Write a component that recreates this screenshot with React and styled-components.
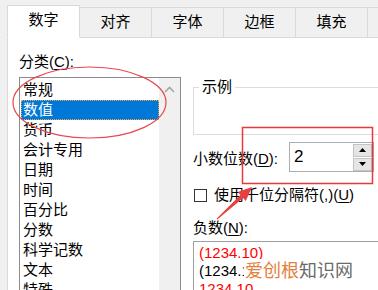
import React from 'react';
import styled, { createGlobalStyle } from 'styled-components';

const GlobalStyle = createGlobalStyle`
  html, body {
    margin: 0;
    padding: 0;
    background: #f0f0f0;
    overflow: hidden;
  }
  body {
    font-family: "Liberation Sans", "Noto Sans CJK SC", sans-serif;
    font-size: 15px;
    color: #000;
  }
`;

const Screen = styled.div`
  position: relative;
  width: 378px;
  height: 290px;
  overflow: hidden;
  background: #f0f0f0;
`;

const TabBar = styled.div`
  display: flex;
  align-items: flex-end;
  height: 38px;
  padding-left: 7px;
  box-sizing: border-box;
`;

const Tab = styled.div`
  flex: none;
  box-sizing: border-box;
  width: ${p => (p.active ? 73 : 72)}px;
  height: ${p => (p.active ? 33 : 31)}px;
  display: flex;
  align-items: center;
  justify-content: center;
  padding-bottom: ${p => (p.active ? 3 : 1)}px;
  line-height: 20px;
  background: ${p => (p.active ? '#fff' : '#f0f0f0')};
  border: 1px solid #d9d9d9;
  border-left: ${p => (p.active ? '1px solid #d9d9d9' : 'none')};
  border-bottom: ${p => (p.active ? '1px solid #fff' : '1px solid #d9d9d9')};
`;

const TabFill = styled.div`
  flex: 1;
  height: 1px;
  background: #d9d9d9;
`;

const Panel = styled.div`
  margin-left: 7px;
  height: 252px;
  display: flex;
  gap: 12px;
  padding: 14px 0 0 11px;
  background: #fff;
  border-left: 1px solid #d9d9d9;
`;

const LeftColumn = styled.div`
  flex: none;
  width: 162px;
  display: flex;
  flex-direction: column;
`;

const Label = styled.div`
  line-height: 20px;
  white-space: nowrap;
  margin-top: ${p => p.mt || 0}px;
`;

const Key = styled.span`
  text-decoration: underline;
  text-underline-offset: 2px;
`;

const CategoryBox = styled.div`
  margin-top: 5px;
  flex: 1;
  display: flex;
  border: 1px solid #8c8c8c;
  border-bottom: none;
  background: #fff;
`;

const Items = styled.div`
  flex: 1;
  padding: 2px 0 0 1px;
`;

const Item = styled.div`
  height: 20px;
  line-height: 20px;
  padding-left: 2px;
  white-space: nowrap;
  color: ${p => (p.selected ? '#fff' : '#000')};
  background: ${p => (p.selected ? '#0078d7' : 'transparent')};
  outline: ${p => (p.selected ? '1px dotted #f3a54a' : 'none')};
  outline-offset: -1px;
`;

const ScrollTrack = styled.div`
  flex: none;
  width: 21px;
  background: #f0f0f0;
  display: flex;
  justify-content: center;
  padding-top: 8px;
`;

const RightColumn = styled.div`
  flex: none;
  width: 200px;
  padding-top: 26px;
  display: flex;
  flex-direction: column;
`;

const GroupBox = styled.fieldset`
  margin: 0;
  padding: 0;
  width: 200px;
  height: 57px;
  box-sizing: border-box;
  border: 1px solid #dcdcdc;
`;

const Legend = styled.legend`
  margin-left: 5px;
  padding: 0 3px;
  line-height: 18px;
`;

const SpinRow = styled.div`
  margin-top: 7px;
  display: flex;
  align-items: center;
  gap: 4px;
  width: 181px;
  justify-content: space-between;
`;

const SpinInput = styled.div`
  width: 85px;
  height: 30px;
  box-sizing: border-box;
  border: 1px solid #adadad;
  display: flex;
  align-items: center;
  justify-content: space-between;
  padding-left: 4px;
  font-size: 17px;
  background: #fff;
`;

const SpinButtons = styled.div`
  display: flex;
  flex-direction: column;
  gap: 1px;
  margin-right: 1px;
`;

const SpinButton = styled.div`
  width: 19px;
  height: 13px;
  box-sizing: border-box;
  background: #e5e5e5;
  border: 1px solid #c4c4c4;
  display: flex;
  align-items: center;
  justify-content: center;
`;

const CheckRow = styled.div`
  margin-top: 13px;
  display: flex;
  align-items: center;
  gap: 7px;
  line-height: 20px;
  white-space: nowrap;
  padding-left: 1px;
`;

const CheckBox = styled.div`
  width: 13px;
  height: 13px;
  box-sizing: border-box;
  border: 1px solid #333;
  background: #fff;
`;

const NumberList = styled.div`
  margin-top: 3px;
  width: 200px;
  flex: 1;
  border: 1px solid #a0a0a0;
  border-bottom: none;
  padding: 2px 0 0 5px;
`;

const NumberItem = styled.div`
  height: 18px;
  line-height: 18px;
  color: ${p => (p.red ? '#ff0000' : '#000')};
  white-space: nowrap;
`;

const Overlay = styled.svg`
  position: absolute;
  left: 0;
  top: 0;
  pointer-events: none;
`;

const Watermark = styled.div`
  position: absolute;
  left: 244px;
  top: 259px;
  padding: 0 1px;
  font-size: 18px;
  line-height: 20px;
  background: #fff;
  font-family: "Noto Sans CJK SC", sans-serif;
  white-space: nowrap;
`;

const Orange = styled.span`
  color: #e2813c;
`;

const Gray = styled.span`
  color: #6b6b6b;
`;

const tabs = ['数字', '对齐', '字体', '边框', '填充', '保护'];
const categories = ['常规', '数值', '货币', '会计专用', '日期', '时间', '百分比', '分数', '科学记数', '文本', '特殊'];

const Triangle = ({ up }) => (
  <svg width="7" height="4" viewBox="0 0 7 4">
    <path d={up ? 'M0 4 L3.5 0 L7 4 Z' : 'M0 0 L7 0 L3.5 4 Z'} fill="#000" />
  </svg>
);

export default function App() {
  return (
    <Screen>
      <GlobalStyle />
      <TabBar>
        {tabs.map((t, i) => (
          <Tab key={t} active={i === 0}>{t}</Tab>
        ))}
        <TabFill />
      </TabBar>

      <Panel>
        <LeftColumn>
          <Label>分类(<Key>C</Key>):</Label>
          <CategoryBox>
            <Items>
              {categories.map(c => (
                <Item key={c} selected={c === '数值'}>{c}</Item>
              ))}
            </Items>
            <ScrollTrack>
              <svg width="11" height="7" viewBox="0 0 11 7">
                <path d="M1 6 L5.5 1.5 L10 6" fill="none" stroke="#a6a6a6" strokeWidth="1.6" />
              </svg>
            </ScrollTrack>
          </CategoryBox>
        </LeftColumn>

        <RightColumn>
          <GroupBox>
            <Legend>示例</Legend>
          </GroupBox>

          <SpinRow>
            <span>小数位数(<Key>D</Key>):</span>
            <SpinInput>
              <span>2</span>
              <SpinButtons>
                <SpinButton><Triangle up /></SpinButton>
                <SpinButton><Triangle /></SpinButton>
              </SpinButtons>
            </SpinInput>
          </SpinRow>

          <CheckRow>
            <CheckBox />
            <span>使用千位分隔符(,)(<Key>U</Key>)</span>
          </CheckRow>

          <Label mt={13}>负数(<Key>N</Key>):</Label>
          <NumberList>
            <NumberItem red>(1234.10)</NumberItem>
            <NumberItem>(1234.10)</NumberItem>
            <NumberItem red>1234.10</NumberItem>
          </NumberList>
        </RightColumn>
      </Panel>

      <Watermark>
        <Orange>爱创根</Orange><Gray>知识网</Gray>
      </Watermark>

      <Overlay width="378" height="290" viewBox="0 0 378 290">
        <ellipse cx="89.5" cy="102.5" rx="76.5" ry="35.5" fill="none" stroke="#e8474f" strokeWidth="1.2" />
        <rect x="242.5" y="127.5" width="130" height="56" fill="none" stroke="#e83a3a" strokeWidth="1.5" />
        <polygon
          points="217.3,219.4 243.1,197.9 245.8,200.9 252,187 237.7,192 240.4,195 216.7,218.6"
          fill="#e8403f"
        />
      </Overlay>
    </Screen>
  );
}
